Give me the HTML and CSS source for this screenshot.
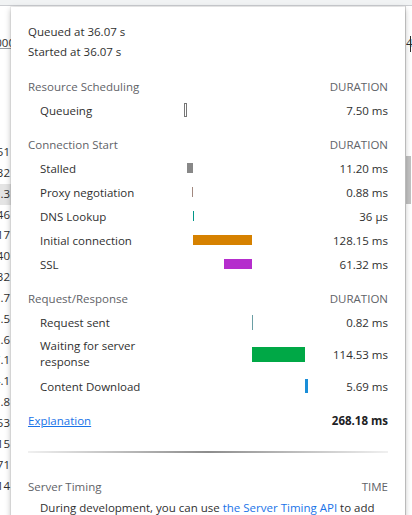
FILE: index.html
```html
<!DOCTYPE html>
<html lang="en">
<head>
<meta charset="utf-8">
<title>Timing</title>
<link rel="stylesheet" href="styles.css">
</head>
<body>
<div class="page">
  <div class="toolbar"></div>
  <div class="workspace">
    <div class="left-col">
      <div class="filter-cell"><span>1000</span></div>
      <div class="table-head"></div>
      <div class="num-row"><span>1.51</span></div>
      <div class="num-row"><span>1.32</span></div>
      <div class="num-row selected"><span>11.3</span></div>
      <div class="num-row"><span>1.46</span></div>
      <div class="num-row"><span>1.17</span></div>
      <div class="num-row"><span>1.40</span></div>
      <div class="num-row"><span>1.32</span></div>
      <div class="num-row"><span>12.7</span></div>
      <div class="num-row"><span>15.5</span></div>
      <div class="num-row"><span>12.6</span></div>
      <div class="num-row"><span>17.1</span></div>
      <div class="num-row"><span>14.1</span></div>
      <div class="num-row"><span>11.8</span></div>
      <div class="num-row"><span>1.53</span></div>
      <div class="num-row"><span>1.15</span></div>
      <div class="num-row"><span>1.71</span></div>
      <div class="num-row"><span>1.14</span></div>
    </div>
    <div class="middle"></div>
    <div class="right-col">
      <div class="right-filter">4</div>
      <div class="scroll-track"><div class="scroll-thumb"></div></div>
    </div>
  </div>

  <div class="popover">
    <div class="stamp">Queued at 36.07 s</div>
    <div class="stamp">Started at 36.07 s</div>

    <div class="section first">
      <div class="row head"><span class="label">Resource Scheduling</span><span class="bar-cell"></span><span class="value">DURATION</span></div>
      <div class="row"><span class="label item">Queueing</span><span class="bar-cell"><span class="bar queueing" style="margin-left:0;width:3px"></span></span><span class="value">7.50 ms</span></div>
    </div>

    <div class="section">
      <div class="row head"><span class="label">Connection Start</span><span class="bar-cell"></span><span class="value">DURATION</span></div>
      <div class="row"><span class="label item">Stalled</span><span class="bar-cell"><span class="bar short stalled" style="margin-left:3px;width:6px"></span></span><span class="value">11.20 ms</span></div>
      <div class="row"><span class="label item">Proxy negotiation</span><span class="bar-cell"><span class="bar short proxy" style="margin-left:8px;width:1px"></span></span><span class="value">0.88 ms</span></div>
      <div class="row"><span class="label item">DNS Lookup</span><span class="bar-cell"><span class="bar short dns" style="margin-left:9px;width:1px"></span></span><span class="value">36 µs</span></div>
      <div class="row"><span class="label item">Initial connection</span><span class="bar-cell"><span class="bar short connecting" style="margin-left:9px;width:59px"></span></span><span class="value">128.15 ms</span></div>
      <div class="row"><span class="label item">SSL</span><span class="bar-cell"><span class="bar short ssl" style="margin-left:40px;width:28px"></span></span><span class="value">61.32 ms</span></div>
    </div>

    <div class="section">
      <div class="row head"><span class="label">Request/Response</span><span class="bar-cell"></span><span class="value">DURATION</span></div>
      <div class="row"><span class="label item">Request sent</span><span class="bar-cell"><span class="bar sending" style="margin-left:68px;width:1px"></span></span><span class="value">0.82 ms</span></div>
      <div class="row tall"><span class="label item wrap">Waiting for server response</span><span class="bar-cell"><span class="bar waiting" style="margin-left:68px;width:53px"></span></span><span class="value">114.53 ms</span></div>
      <div class="row"><span class="label item">Content Download</span><span class="bar-cell"><span class="bar receiving" style="margin-left:121px;width:3px"></span></span><span class="value">5.69 ms</span></div>
    </div>

    <div class="row total">
      <a class="link" href="#">Explanation</a>
      <span class="bar-cell"></span>
      <span class="value strong">268.18 ms</span>
    </div>

    <div class="divider"></div>

    <div class="section server">
      <div class="row head"><span class="label">Server Timing</span><span class="bar-cell"></span><span class="value">TIME</span></div>
      <p class="note">During development, you can use <a class="plain-link" href="#">the Server Timing API</a> to add insights into the server-side timing of this request.</p>
    </div>
  </div>
</div>
</body>
</html>
```

FILE: styles.css
```css
* { box-sizing: border-box; }

html, body {
  margin: 0;
  padding: 0;
  height: 100%;
  overflow: hidden;
}

body {
  font-family: "Segoe UI", "Open Sans", "Noto Sans", sans-serif;
  font-size: 11.5px;
  color: #303030;
  background: #ffffff;
}

.page {
  position: relative;
  width: 412px;
  height: 515px;
  display: flex;
  flex-direction: column;
  overflow: hidden;
}

.toolbar {
  height: 6px;
  flex: none;
  background: #f1f3f4;
  border-bottom: 1px solid #cbcdd1;
}

.workspace {
  flex: 1;
  display: flex;
}

.left-col {
  width: 11px;
  flex: none;
  display: flex;
  flex-direction: column;
  overflow: hidden;
}

.filter-cell {
  margin-top: 27px;
  height: 16px;
  line-height: 20px;
  border-bottom: 1px solid #9aa0a6;
  display: flex;
  justify-content: flex-end;
  white-space: nowrap;
  overflow: hidden;
}

.filter-cell span { flex: none; margin-right: -4px; }

.table-head {
  height: 93px;
  flex: none;
}

.num-row {
  height: 20.85px;
  line-height: 20.85px;
  flex: none;
  display: flex;
  justify-content: flex-end;
  white-space: nowrap;
  overflow: hidden;
  padding-right: 1px;
}

.num-row span { flex: none; }

.num-row.selected { background: #e4e4e4; }

.middle { flex: 1; }

.right-col {
  width: 7px;
  flex: none;
  display: flex;
  flex-direction: column;
  border-left: 1px solid #e0e0e0;
  overflow: hidden;
}

.right-filter {
  margin-top: 30px;
  width: 5px;
  height: 16px;
  line-height: 14px;
  white-space: nowrap;
  border-right: 1px solid #303030;
}

.scroll-track {
  margin-top: 104px;
  flex: 1;
}

.scroll-thumb {
  height: 48px;
  width: 5px;
  background: #c1c1c1;
}

/* Popover overlaying the table */
.popover {
  position: absolute;
  left: 11px;
  top: 7px;
  width: 394px;
  height: 530px;
  background: #ffffff;
  box-shadow: 0 0 0 1px rgba(0,0,0,0.05), 0 2px 6px rgba(0,0,0,0.28);
  padding: 15px 17px 0 17px;
}

.stamp {
  height: 20px;
  line-height: 20px;
}

.section { margin-top: 10px; }
.section.first { margin-top: 12px; }

.row {
  display: grid;
  grid-template-columns: 156px 124px 80px;
  align-items: center;
  height: 24px;
}

.row.tall { height: 40px; }

.head { color: #5f6368; }

.label { white-space: nowrap; }
.label.item { padding-left: 12px; }
.label.wrap { white-space: normal; width: 128px; line-height: 16px; }

.value {
  text-align: right;
  white-space: nowrap;
}

.strong { font-weight: bold; color: #202124; }

.bar-cell {
  display: flex;
  align-items: center;
  height: 100%;
}

.bar {
  display: block;
  height: 14px;
  flex: none;
}

.bar.short { height: 10px; }

.queueing {
  border: 1px solid #777;
  background: #fff;
}

.stalled { background: #888888; }
.proxy { background: #a1887f; }
.dns { background: #009688; }
.connecting { background: #d68100; }
.ssl { background: #b52dcd; }
.sending { background: #6a9ea4; height: 15px; }
.waiting { background: #00a846; height: 15px; }
.receiving { background: #1a8ed8; }

.total { margin-top: 10px; }

.link {
  color: #1a73e8;
  text-decoration: underline;
}

.divider {
  height: 2px;
  margin-top: 19px;
  background: linear-gradient(to right, rgba(0,0,0,0.06), rgba(0,0,0,0.45) 50%, rgba(0,0,0,0.06));
}

.section.server { margin-top: 21px; }

.note {
  margin: 0;
  padding-left: 12px;
  line-height: 20px;
}

.plain-link {
  color: #1a73e8;
  text-decoration: none;
}
```
